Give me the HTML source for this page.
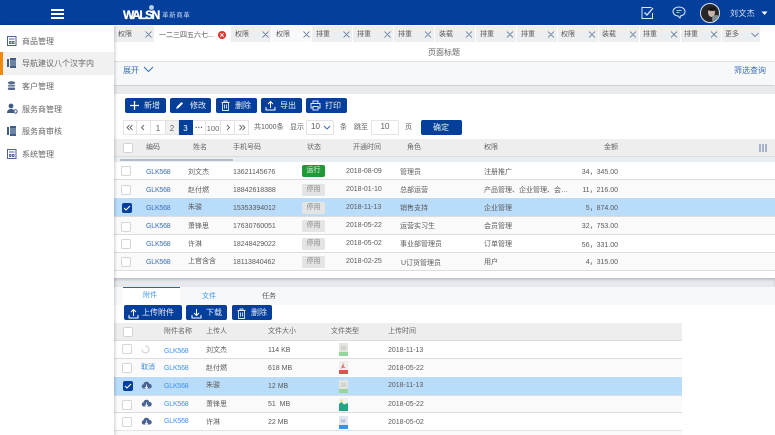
<!DOCTYPE html>
<html lang="zh"><head><meta charset="utf-8"><style>
html,body{margin:0;padding:0;width:775px;height:435px;overflow:hidden;background:#fff}
body{position:relative;font-family:"Liberation Sans","Noto Sans CJK SC",sans-serif;font-size:7px;color:#5a5a5a}
#a{left:0;top:0;width:775px;height:435px;overflow:hidden;filter:blur(.3px)}
div,span,svg{position:absolute}
.t{line-height:10px;height:10px;white-space:nowrap;margin-top:1px}
.c{transform:translateX(-50%)}
.r{transform:translateX(-100%)}
.blue{color:#3b6fb5;letter-spacing:-.2px}
.lb{color:#3f95ee;letter-spacing:-.2px}
.w{color:#fff;font-size:8px}
.btn{background:#033f9b;border-radius:2px;height:15px;top:98px}
.tab{top:26px;height:16px;background:#eceff2;border-right:1px solid #fff;box-sizing:border-box}
.pg{top:120px;width:14px;height:15px;box-sizing:border-box;border:1px solid #e3e3e3;background:#fff;text-align:center;line-height:16px;color:#666;border-left:none;font-size:8px}
.cb{width:10px;height:10px;border:1px solid #d5d5d5;border-radius:2px;background:#fff;box-sizing:border-box}
.cbk{width:10px;height:10px;border-radius:2px;background:#033f9b}
.line{height:1px;background:#dcdde3}
.tag{left:302px;width:23px;height:12px;border-radius:2px;background:#e4e4e4;color:#888;text-align:center;line-height:12px}
.menu{left:22px;color:#666;font-size:8px}
.h{color:#666}
</style></head><body><div id="a">

<!-- header -->
<div style="left:0;top:0;width:775px;height:25px;background:#033f9b"></div>
<div style="left:51px;top:9px;width:13px;height:1.5px;background:#fff"></div>
<div style="left:51px;top:13px;width:13px;height:1.5px;background:#fff"></div>
<div style="left:51px;top:17px;width:13px;height:1.5px;background:#fff"></div>
<span class="t" style="left:123px;top:8px;font-size:12px;line-height:12px;height:12px;font-weight:bold;color:#fff;letter-spacing:-1.500px;-webkit-text-stroke:.3px #fff">WALSN</span>
<div style="left:149px;top:5px;width:5px;height:5px;border-radius:50%;background:#b9cbe6"></div>
<span class="t" style="left:162px;top:10px;font-size:6.500px;color:#c9d6ec;letter-spacing:.6px">革新商革</span>
<svg style="left:640px;top:6px" width="15" height="14" viewBox="0 0 15 14" fill="none" stroke="#dfe7f3"><path d="M11.500 1.500H2v11h10.500V7"/><path d="M4.500 6.500l2.500 2.500 6-7" stroke-width="1.300"/></svg>
<svg style="left:672px;top:6px" width="14" height="13" viewBox="0 0 14 13" fill="none" stroke="#dfe7f3"><path d="M7 1C3.500 1 1 3 1 5.500S3.500 10 6 10l2 2 .5-2.100C11 9.500 13 8 13 5.500S10.500 1 7 1z"/><path d="M4.500 4.500h5M4.500 6.500h3" stroke-width=".8"/></svg>
<div style="left:700px;top:3px;width:20px;height:20px;border-radius:50%;background:#26272b;border:1px solid #dfe3ea;box-sizing:border-box;overflow:hidden">
  <div style="left:7px;top:4px;width:7px;height:9px;border-radius:50%;background:#c9b3a6"></div>
  <div style="left:7px;top:3px;width:8px;height:4px;border-radius:50%;background:#17171a"></div>
  <div style="left:11px;top:11px;width:8px;height:8px;background:#7f8f8c;border-radius:50%"></div>
</div>
<span class="t" style="left:730px;top:8px;font-size:8px;color:#dbe3f0;letter-spacing:.4px">刘文杰</span>
<svg style="left:761px;top:11px" width="7" height="5"><path d="M.5 .5h6L3.500 4z" fill="#fff"/></svg>

<!-- sidebar -->
<div style="left:0;top:25px;width:114px;height:410px;background:#fff;box-shadow:1px 0 3px rgba(0,0,0,.2);z-index:3">
  <div style="left:0;top:27px;width:114px;height:23px;background:#f1f1f1"></div>
  <div style="left:0;top:27px;width:3px;height:23px;background:#f08a0c"></div>
</div>
<div style="z-index:4;left:0;top:0;width:114px;height:435px">
<svg style="left:7px;top:36px" width="10" height="10" fill="none" stroke="#4c6285"><rect x=".5" y=".5" width="8.500" height="9"/><path d="M2 3h5.500M2.500 5.500h1.500v2h-1.500zM5.500 5.500h1.500v2h-1.500z" stroke-width=".9"/></svg>
<svg style="left:7px;top:58px" width="10" height="10"><rect x="0" y="1" width="2" height="8" fill="#3f5c87"/><rect x="3" y="0" width="6" height="10" fill="#3f5c87"/><path d="M3 3h6M3 5h6M3 7h6" stroke="#f3f3f3" stroke-width=".6"/></svg>
<svg style="left:7px;top:81px" width="10" height="10"><ellipse cx="4.500" cy="1.800" rx="3.700" ry="1.500" fill="#54688a"/><rect x=".8" y="3.800" width="7.400" height="1.800" rx=".9" fill="#6a7c9a"/><rect x=".8" y="6.500" width="7.400" height="2.500" rx="1.200" fill="#54688a"/></svg>
<svg style="left:7px;top:103px" width="11" height="11"><circle cx="4" cy="3" r="2.400" fill="#3f5c87"/><path d="M0 10c0-3 2-4 4-4s3 1 3.500 2v2z" fill="#3f5c87"/><circle cx="8.500" cy="8.500" r="1.700" fill="none" stroke="#3f5c87"/></svg>
<svg style="left:7px;top:126px" width="10" height="10"><rect x="0" y="1" width="2" height="8" fill="#3f5c87"/><rect x="3" y="0" width="6" height="10" fill="#3f5c87"/><path d="M3 3h6M3 5h6M3 7h6" stroke="#fff" stroke-width=".6"/></svg>
<svg style="left:7px;top:149px" width="10" height="10" fill="none" stroke="#4c6285"><rect x=".5" y=".5" width="8.500" height="9"/><path d="M2 3h5.500M2.500 5.500h1.500v2h-1.500zM5.500 5.500h1.500v2h-1.500z" stroke-width=".9"/></svg>
<span class="t menu" style="top:36px">商品管理</span>
<span class="t menu" style="top:58px">导航建议八个汉字内</span>
<span class="t menu" style="top:81px">客户管理</span>
<span class="t menu" style="top:104px">服务商管理</span>
<span class="t menu" style="top:126px">服务商审核</span>
<span class="t menu" style="top:149px">系统管理</span>
</div>

<!-- tabs -->
<div class="tab" style="left:114px;width:41px"></div>
<div class="tab" style="left:155px;width:76px;background:#fff"></div>
<div class="tab" style="left:231px;width:41px"></div>
<div class="tab" style="left:272px;width:40px;background:#f8f9fa"></div>
<div class="tab" style="left:312px;width:41px"></div>
<div class="tab" style="left:353px;width:41px"></div>
<div class="tab" style="left:394px;width:41px"></div>
<div class="tab" style="left:435px;width:41px"></div>
<div class="tab" style="left:476px;width:41px"></div>
<div class="tab" style="left:517px;width:41px"></div>
<div class="tab" style="left:558px;width:41px"></div>
<div class="tab" style="left:599px;width:41px"></div>
<div class="tab" style="left:640px;width:41px"></div>
<div class="tab" style="left:681px;width:41px"></div>
<div class="tab" style="left:722px;width:39px"></div>
<span class="t" style="left:118px;top:29px">权限</span>
<span class="t" style="left:159px;top:30px;color:#555">一二三四五六七...</span>
<span class="t" style="left:235px;top:29px">权限</span>
<span class="t" style="left:276px;top:29px">权限</span>
<span class="t" style="left:316px;top:29px">排重</span>
<span class="t" style="left:357px;top:29px">排重</span>
<span class="t" style="left:398px;top:29px">排重</span>
<span class="t" style="left:439px;top:29px">装载</span>
<span class="t" style="left:480px;top:29px">排重</span>
<span class="t" style="left:521px;top:29px">排重</span>
<span class="t" style="left:561px;top:29px">权限</span>
<span class="t" style="left:602px;top:29px">装载</span>
<span class="t" style="left:643px;top:29px">排重</span>
<span class="t" style="left:684px;top:29px">排重</span>
<span class="t" style="left:725px;top:29px">更多</span>
<svg style="left:0;top:0;z-index:1" width="775" height="45" fill="none" stroke="#5b6f8f" stroke-width=".8">
<path d="M145.500 31.500l6 6m0-6l-6 6M262.500 31.500l6 6m0-6l-6 6M303.500 31.500l6 6m0-6l-6 6M343.500 31.500l6 6m0-6l-6 6M384.500 31.500l6 6m0-6l-6 6M425 31.500l6 6m0-6l-6 6M466 31.500l6 6m0-6l-6 6M507 31.500l6 6m0-6l-6 6M548 31.500l6 6m0-6l-6 6M589 31.500l6 6m0-6l-6 6M630 31.500l6 6m0-6l-6 6M671 31.500l6 6m0-6l-6 6M711 31.500l6 6m0-6l-6 6"/>
<path d="M751.500 33l3.500 3.500L758.500 33"/>
<circle cx="222" cy="35" r="4" fill="#e5322d" stroke="none"/>
<path d="M220.300 33.300l3.400 3.400m0-3.400l-3.400 3.400" stroke="#fff" stroke-width="1"/>
</svg>

<!-- title & filter -->
<span class="t c" style="left:444px;top:47px;color:#666;font-size:8px">页面标题</span>
<div style="left:114px;top:61px;width:661px;height:1px;background:#e6e6e6"></div>
<div style="left:114px;top:62px;width:661px;height:23px;background:#f7f8fa;box-shadow:0 1px 2px rgba(70,80,110,.4)"></div>
<span class="t blue" style="left:123px;top:65px;font-size:8px;letter-spacing:0">展开</span>
<svg style="left:143px;top:66px" width="11" height="8" fill="none" stroke="#3b6fb5"><path d="M1 1l4.500 4.500L10 1"/></svg>
<span class="t blue r" style="left:766px;top:65px;font-size:8px;letter-spacing:0">筛选查询</span>
<div style="left:114px;top:86px;width:661px;height:8px;background:#e9eaed"></div>

<!-- toolbar -->
<div class="btn" style="left:125px;width:41px"></div>
<div class="btn" style="left:170px;width:41px"></div>
<div class="btn" style="left:216px;width:41px"></div>
<div class="btn" style="left:261px;width:41px"></div>
<div class="btn" style="left:306px;width:41px"></div>
<svg style="left:129px;top:100px" width="11" height="11" stroke="#fff" stroke-width="1.300"><path d="M5.500 1v9M1 5.500h9"/></svg>
<svg style="left:175px;top:101px" width="9" height="9"><path d="M1 8l1-2.500L6.500 1 8 2.500 3.500 7z" fill="#fff"/></svg>
<svg style="left:221px;top:100px" width="9" height="11" fill="none" stroke="#dfe7f3" stroke-width=".9"><path d="M.5 2.500h8M3 2.500V1h3v1.500M1.500 2.500v8h6v-8M3.500 4.500v4M5.500 4.500v4"/></svg>
<svg style="left:265px;top:100px" width="11" height="11" fill="none" stroke="#fff"><path d="M5.500 8V1.500M3 4l2.500-2.500L8 4M1 7v3h9V7"/></svg>
<svg style="left:310px;top:100px" width="11" height="11" fill="none" stroke="#dfe7f3"><path d="M3 3.500V1h5v2.500M3 8H1V3.500h9V8H8"/><rect x="3" y="6.500" width="5" height="3.500"/></svg>
<span class="t w" style="left:144px;top:100px;opacity:.9">新增</span>
<span class="t w" style="left:190px;top:100px;opacity:.9">修改</span>
<span class="t w" style="left:235px;top:100px;opacity:.9">删除</span>
<span class="t w" style="left:280px;top:100px;opacity:.9">导出</span>
<span class="t w" style="left:325px;top:100px;opacity:.9">打印</span>

<!-- pagination -->
<div class="pg" style="left:123px;border-left:1px solid #e3e3e3"></div>
<div class="pg" style="left:137px"></div>
<div class="pg" style="left:151px;width:15px">1</div>
<div class="pg" style="left:166px;width:13px;background:#f0f0f0">2</div>
<div class="pg" style="left:179px;background:#033f9b;color:#fff;border-color:#033f9b">3</div>
<div class="pg" style="left:193px;width:13px;color:#3b5e95;line-height:13px;font-weight:bold">···</div>
<div class="pg" style="left:206px;width:15px;font-size:7.500px">100</div>
<div class="pg" style="left:221px"></div>
<div class="pg" style="left:235px"></div>
<svg style="left:123px;top:120px" width="126" height="15" fill="none" stroke="#666" stroke-width=".9">
<path d="M6.500 5l-2.500 2.500 2.500 2.500M9.500 5L7 7.500 9.500 10"/>
<path d="M21 5l-2.500 2.500L21 10"/>
<path d="M104 5l2.500 2.500L104 10"/>
<path d="M116.500 5l2.500 2.500-2.500 2.500M119.500 5l2.500 2.500-2.500 2.500"/>
</svg>
<span class="t" style="left:254px;top:122px">共1000条</span>
<span class="t" style="left:290px;top:122px">显示</span>
<div style="left:306px;top:120px;width:28px;height:15px;border:1px solid #e3e3e3;border-radius:2px;box-sizing:border-box;background:#fff"></div>
<span class="t" style="left:311px;top:121px;font-size:8px">10</span>
<svg style="left:323px;top:125px" width="9" height="6" fill="none" stroke="#3b6fb5"><path d="M1 1l3 3 3-3"/></svg>
<span class="t" style="left:340px;top:122px">条</span>
<span class="t" style="left:354px;top:122px">跳至</span>
<div style="left:371px;top:120px;width:28px;height:15px;border:1px solid #e3e3e3;border-radius:2px;box-sizing:border-box;background:#fff"></div>
<span class="t c" style="left:385px;top:121px;font-size:8px">10</span>
<span class="t" style="left:405px;top:122px">页</span>
<div style="left:421px;top:120px;width:41px;height:15px;background:#033f9b;border-radius:2px"></div>
<span class="t w c" style="left:441px;top:122px;opacity:.9">确定</span>

<!-- table 1 header -->
<div style="left:114px;top:139px;width:661px;height:17px;background:#eeeeef;border-bottom:1px solid #dcdcdf"></div>
<div style="left:114px;top:157px;width:661px;height:5px;background:#e9eef2"></div>
<div style="left:120px;top:159px;width:113px;height:2px;background:#b6bdc9"></div>
<div class="cb" style="left:123px;top:143px"></div>
<span class="t h" style="left:146px;top:142px">编码</span>
<span class="t h" style="left:193px;top:142px">姓名</span>
<span class="t h" style="left:233px;top:142px">手机号码</span>
<span class="t h" style="left:307px;top:142px">状态</span>
<span class="t h" style="left:353px;top:142px">开通时间</span>
<span class="t h" style="left:407px;top:142px">角色</span>
<span class="t h" style="left:484px;top:142px">权限</span>
<span class="t h" style="left:604px;top:142px">金额</span>
<svg style="left:759px;top:143px" width="9" height="9" stroke="#5f7aa6"><path d="M1 1v8M4 1v8M7 1v8"/></svg>

<!-- table 1 rows -->
<div style="left:114px;top:180px;width:661px;height:17px;background:#fafafa"></div>
<div style="left:114px;top:198px;width:661px;height:18px;background:#b9dcfb"></div>
<div style="left:114px;top:217px;width:661px;height:17px;background:#fafafa"></div>
<div style="left:114px;top:253px;width:661px;height:17px;background:#fafafa"></div>
<div class="line" style="left:114px;top:179px;width:661px"></div>
<div class="line" style="left:114px;top:216px;width:661px"></div>
<div class="line" style="left:114px;top:234px;width:661px"></div>
<div class="line" style="left:114px;top:252px;width:661px"></div>
<div class="line" style="left:114px;top:270px;width:661px"></div>

<div class="cb" style="left:121px;top:166px"></div>
<div class="cb" style="left:121px;top:185px"></div>
<div class="cbk" style="left:122px;top:203px"></div>
<svg style="left:123px;top:205px" width="8" height="6" fill="none" stroke="#fff" stroke-width="1.100"><path d="M1 3l2 2 4-4"/></svg>
<div class="cb" style="left:121px;top:222px"></div>
<div class="cb" style="left:121px;top:239px"></div>
<div class="cb" style="left:121px;top:257px"></div>

<span class="t blue" style="left:146px;top:167px">GLK568</span>
<span class="t blue" style="left:146px;top:185px">GLK568</span>
<span class="t blue" style="left:146px;top:203px">GLK568</span>
<span class="t blue" style="left:146px;top:221px">GLK568</span>
<span class="t blue" style="left:146px;top:239px">GLK568</span>
<span class="t blue" style="left:146px;top:257px">GLK568</span>

<span class="t" style="left:188px;top:167px">刘文杰</span>
<span class="t" style="left:188px;top:185px">赵付燃</span>
<span class="t" style="left:188px;top:202px">朱骏</span>
<span class="t" style="left:188px;top:221px">萧锋思</span>
<span class="t" style="left:188px;top:239px">许淋</span>
<span class="t" style="left:188px;top:256px">上官含含</span>

<span class="t" style="left:233px;top:167px">13621145676</span>
<span class="t" style="left:233px;top:185px">18842618388</span>
<span class="t" style="left:233px;top:203px">15353394012</span>
<span class="t" style="left:233px;top:221px">17630760051</span>
<span class="t" style="left:233px;top:239px">18248429022</span>
<span class="t" style="left:233px;top:257px">18113840462</span>

<div class="tag" style="top:165px;background:#1f9a36;color:#e8f6ea">运行</div>
<div class="tag" style="top:184px">停用</div>
<div class="tag" style="top:202px">停用</div>
<div class="tag" style="top:220px">停用</div>
<div class="tag" style="top:238px">停用</div>
<div class="tag" style="top:256px">停用</div>

<span class="t" style="left:346px;top:166px">2018-08-09</span>
<span class="t" style="left:346px;top:184px">2018-01-10</span>
<span class="t" style="left:346px;top:202px">2018-11-13</span>
<span class="t" style="left:346px;top:220px">2018-05-22</span>
<span class="t" style="left:346px;top:238px">2018-05-02</span>
<span class="t" style="left:346px;top:256px">2018-02-25</span>

<span class="t" style="left:400px;top:167px">管理员</span>
<span class="t" style="left:400px;top:185px">总部运营</span>
<span class="t" style="left:400px;top:203px">销售支持</span>
<span class="t" style="left:400px;top:221px">运营实习生</span>
<span class="t" style="left:400px;top:239px">事业部管理员</span>
<span class="t" style="left:401px;top:258px">U订货管理员</span>

<span class="t" style="left:484px;top:167px">注册推广</span>
<span class="t" style="left:484px;top:185px">产品管理、企业管理、会…</span>
<span class="t" style="left:484px;top:203px">企业管理</span>
<span class="t" style="left:484px;top:221px">会员管理</span>
<span class="t" style="left:484px;top:239px">订单管理</span>
<span class="t" style="left:484px;top:257px">用户</span>

<span class="t r" style="left:618px;top:167px">34，345.00</span>
<span class="t r" style="left:618px;top:185px">11，216.00</span>
<span class="t r" style="left:618px;top:203px">5，874.00</span>
<span class="t r" style="left:618px;top:221px">32，753.00</span>
<span class="t r" style="left:618px;top:240px">56，331.00</span>
<span class="t r" style="left:618px;top:257px">4，315.00</span>

<!-- divider -->
<div style="left:114px;top:278px;width:661px;height:9px;background:#e7e9ed;box-shadow:inset 0 2px 2px rgba(70,80,110,.25)"></div>

<!-- bottom tabs -->
<div style="left:114px;top:287px;width:661px;height:18px;background:#f7f8fa"></div>
<div style="left:123px;top:287px;width:57px;height:18px;background:#fff;border-top:1px solid #2a62ad;box-sizing:border-box"></div>
<span class="t lb c" style="left:150px;top:290px;letter-spacing:0">附件</span>
<span class="t lb c" style="left:209px;top:291px;letter-spacing:0">文件</span>
<span class="t c" style="left:269px;top:291px">任务</span>

<div class="btn" style="left:124px;top:305px;width:58px"></div>
<div class="btn" style="left:186px;top:305px;width:41px"></div>
<div class="btn" style="left:232px;top:305px;width:40px"></div>
<svg style="left:128px;top:308px" width="11" height="11" fill="none" stroke="#fff"><path d="M5.500 8V1.500M3 4l2.500-2.500L8 4M1 7v3h9V7"/></svg>
<svg style="left:191px;top:308px" width="11" height="11" fill="none" stroke="#fff"><path d="M5.500 1v6.500M3 5l2.500 2.500L8 5M1 7v3h9V7"/></svg>
<svg style="left:237px;top:308px" width="9" height="11" fill="none" stroke="#dfe7f3" stroke-width=".9"><path d="M.5 2.500h8M3 2.500V1h3v1.500M1.500 2.500v8h6v-8M3.500 4.500v4M5.500 4.500v4"/></svg>
<span class="t w" style="left:142px;top:307px;opacity:.9">上传附件</span>
<span class="t w" style="left:206px;top:307px;opacity:.9">下载</span>
<span class="t w" style="left:251px;top:307px;opacity:.9">删除</span>

<!-- table 2 -->
<div style="left:114px;top:323px;width:568px;height:17px;background:#eeeeef"></div>
<div class="line" style="left:114px;top:340px;width:568px"></div>
<div style="left:114px;top:359px;width:568px;height:17px;background:#fafafa"></div>
<div style="left:114px;top:377px;width:568px;height:18px;background:#b9dcfb"></div>
<div style="left:114px;top:396px;width:568px;height:17px;background:#fafafa"></div>
<div style="left:114px;top:431px;width:568px;height:4px;background:#fafafa"></div>
<div class="line" style="left:114px;top:358px;width:568px"></div>
<div class="line" style="left:114px;top:395px;width:568px"></div>
<div class="line" style="left:114px;top:412px;width:568px"></div>
<div style="left:114px;top:430px;width:568px;height:1px;background:#e3e4e8"></div>

<div class="cb" style="left:123px;top:327px"></div>
<span class="t h" style="left:164px;top:326px">附件名称</span>
<span class="t h" style="left:206px;top:326px">上传人</span>
<span class="t h" style="left:268px;top:326px">文件大小</span>
<span class="t h" style="left:331px;top:326px">文件类型</span>
<span class="t h" style="left:388px;top:326px">上传时间</span>

<div class="cb" style="left:122px;top:344px"></div>
<div class="cb" style="left:122px;top:363px"></div>
<div class="cbk" style="left:123px;top:381px"></div>
<svg style="left:124px;top:383px" width="8" height="6" fill="none" stroke="#fff" stroke-width="1.100"><path d="M1 3l2 2 4-4"/></svg>
<div class="cb" style="left:122px;top:400px"></div>
<div class="cb" style="left:122px;top:417px"></div>

<svg style="left:141px;top:345px" width="9" height="9" fill="none" stroke="#d5d5d5" stroke-width="1.300"><path d="M4.500 1a3.500 3.500 0 1 1-3.500 3.500"/></svg>
<span class="t lb" style="left:141px;top:362px;color:#3f8ad8;letter-spacing:0">取消</span>
<svg style="left:141px;top:381px" width="11" height="9"><path d="M2.500 7.500a2.200 2.200 0 0 1 0-4.300 3 3 0 0 1 5.800-.3 2.300 2.300 0 0 1 .3 4.600z" fill="#4a6390"/><path d="M5.500 3.500v4M4 6l1.500 1.500L7 6" stroke="#fff" stroke-width=".8" fill="none"/></svg>
<svg style="left:141px;top:399px" width="11" height="9"><path d="M2.500 7.500a2.200 2.200 0 0 1 0-4.300 3 3 0 0 1 5.800-.3 2.300 2.300 0 0 1 .3 4.600z" fill="#4a6390"/><path d="M5.500 3.500v4M4 6l1.500 1.500L7 6" stroke="#fff" stroke-width=".8" fill="none"/></svg>
<svg style="left:141px;top:417px" width="11" height="9"><path d="M2.500 7.500a2.200 2.200 0 0 1 0-4.300 3 3 0 0 1 5.800-.3 2.300 2.300 0 0 1 .3 4.600z" fill="#4a6390"/><path d="M5.500 3.500v4M4 6l1.500 1.500L7 6" stroke="#fff" stroke-width=".8" fill="none"/></svg>

<span class="t lb" style="left:164px;top:346px">GLK568</span>
<span class="t lb" style="left:164px;top:363px">GLK568</span>
<span class="t lb" style="left:164px;top:381px">GLK568</span>
<span class="t lb" style="left:164px;top:399px">GLK568</span>
<span class="t lb" style="left:164px;top:416px">GLK568</span>

<span class="t" style="left:206px;top:345px">刘文杰</span>
<span class="t" style="left:206px;top:363px">赵付燃</span>
<span class="t" style="left:206px;top:380px">朱骏</span>
<span class="t" style="left:206px;top:399px">萧锋思</span>
<span class="t" style="left:206px;top:417px">许淋</span>

<span class="t" style="left:268px;top:345px">114 KB</span>
<span class="t" style="left:268px;top:363px">618 MB</span>
<span class="t" style="left:268px;top:381px">12 MB</span>
<span class="t" style="left:268px;top:399px">51&nbsp; MB</span>
<span class="t" style="left:268px;top:417px">22 MB</span>

<svg style="left:338px;top:343px" width="11" height="13"><rect x="1" y="0" width="9" height="9" fill="#e4e4df"/><rect x="3" y="3" width="5" height="4" fill="#d3d3cd"/><rect x="1" y="9" width="9" height="4" fill="#93d79e"/></svg>
<svg style="left:338px;top:361px" width="11" height="13"><rect x="1" y="0" width="9" height="9" fill="#eeeeea"/><path d="M5 1.500l.8 4 2 1.500-3-.5-2 1.500 1.500-3z" fill="#d9534f"/><rect x="1" y="9" width="9" height="4" fill="#d9534f"/></svg>
<svg style="left:338px;top:380px" width="11" height="13"><rect x="1" y="0" width="9" height="9" fill="#e4e4df"/><rect x="3" y="3" width="5" height="4" fill="#d3d3cd"/><rect x="1" y="9" width="9" height="4" fill="#93d79e"/></svg>
<svg style="left:338px;top:398px" width="11" height="13"><rect x="1" y="0" width="9" height="13" fill="#eef2ea"/><circle cx="3.500" cy="2.500" r="1" fill="#f0d75a"/><path d="M1 13V6l2.500-2 2.500 2.500L10 5v8z" fill="#23a584"/></svg>
<svg style="left:338px;top:416px" width="11" height="13"><rect x="1" y="0" width="9" height="9" fill="#e2e6ef"/><path d="M3 3l1 3 1-2 1 2 1-3" stroke="#9fb4d8" fill="none" stroke-width=".8"/><rect x="1" y="9" width="9" height="4" fill="#2f95ea"/></svg>

<span class="t" style="left:388px;top:345px">2018-11-13</span>
<span class="t" style="left:388px;top:363px">2018-05-22</span>
<span class="t" style="left:388px;top:380px">2018-11-13</span>
<span class="t" style="left:388px;top:399px">2018-05-22</span>
<span class="t" style="left:388px;top:417px">2018-05-02</span>

</div></body></html>
